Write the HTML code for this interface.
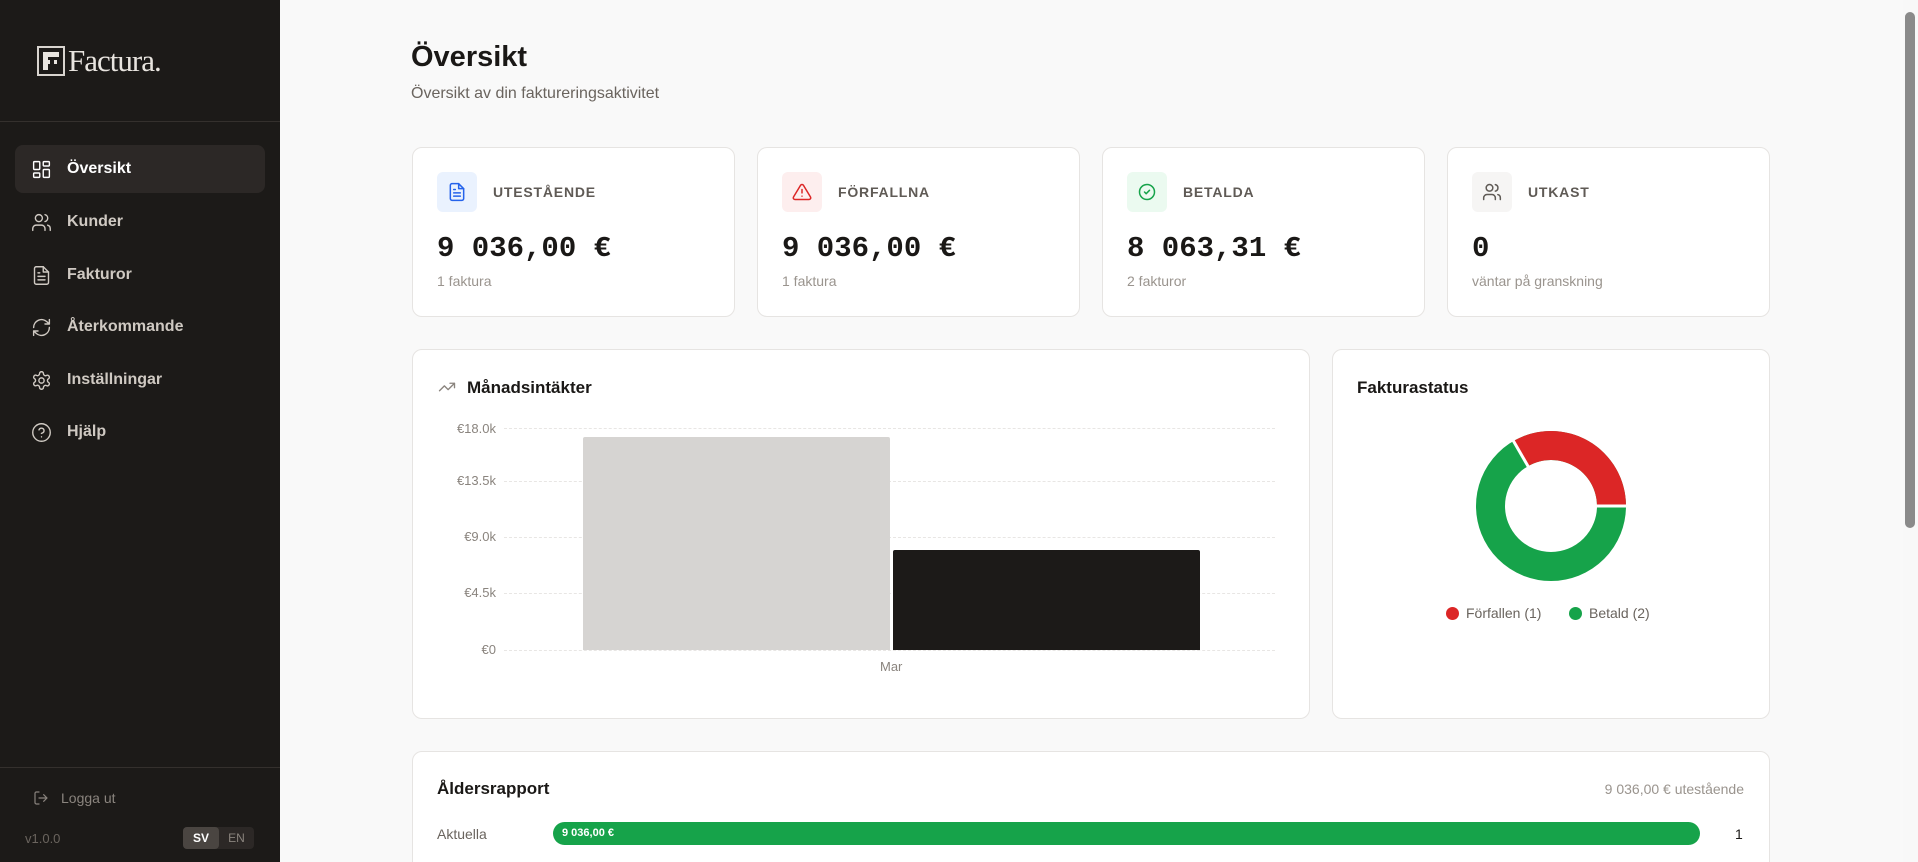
<!DOCTYPE html>
<html><head><meta charset="utf-8">
<style>
*{box-sizing:border-box;margin:0;padding:0}
html,body{width:1918px;height:862px;overflow:hidden;background:#f9f9f9;font-family:"Liberation Sans",sans-serif;color:#1a1816}
#root{position:relative;width:1918px;height:862px;overflow:hidden}
.sb{position:absolute;left:0;top:0;width:280px;height:862px;background:#1c1a18}
.logo{position:absolute;left:37px;top:43px;display:flex;align-items:center;color:#e8e4df;font-family:"Liberation Serif",serif;font-size:31px;letter-spacing:-1px}
.logo .box{width:28px;height:30px;border:2px solid #d8d4cf;margin-right:3px;position:relative}
.div{position:absolute;left:0;width:280px;height:1px;background:#34302d}
.nav{position:absolute;left:15px;width:250px;height:48px;display:flex;align-items:center;padding-left:16px;font-size:16px;font-weight:bold;color:#cfc9c2;border-radius:8px}
.nav.act{background:#2c2826;color:#fff}
.nav svg{width:21px;height:21px;margin-right:15px;fill:none;stroke:#cfc9c2;stroke-width:1.6;stroke-linecap:round;stroke-linejoin:round}
.nav.act svg{stroke:#fff}
.card{position:absolute;background:#fff;border:1px solid #e6e4e2;border-radius:10px}
.ib{position:absolute;left:24px;top:24px;width:40px;height:40px;border-radius:6px;display:flex;align-items:center;justify-content:center}
.ib svg{width:20px;height:20px;fill:none;stroke-width:1.8;stroke-linecap:round;stroke-linejoin:round}
.lab{position:absolute;left:80px;top:36px;font-size:14px;font-weight:bold;letter-spacing:.8px;color:#5f5a55}
.num{position:absolute;left:24px;top:84px;font-family:"Liberation Mono",monospace;font-weight:bold;font-size:29px;color:#1a1816}
.sub{position:absolute;left:24px;top:125px;font-size:14px;color:#9a948e}
.ax{position:absolute;font-size:13px;color:#8a847e;text-align:right;width:60px}
.grid{position:absolute;left:504px;width:771px;border-top:1.5px dashed #e8e6e4}
</style></head><body><div id="root">
<div class="sb">
  <div class="logo"><div class="box"><svg width="24" height="26" viewBox="0 0 24 26" style="position:absolute;left:0;top:0"><path d="M4 4h16v5H9v3h9v4H9v6H4z" fill="#e8e4df"/><path d="M11 12h4v4h-4z" fill="#1c1a18"/></svg></div>Factura.</div>
  <div class="div" style="top:121px"></div>
  <div class="nav act" style="top:145px"><svg viewBox="0 0 24 24"><rect x="3" y="3" width="7" height="9" rx="1"/><rect x="14" y="3" width="7" height="5" rx="1"/><rect x="14" y="12" width="7" height="9" rx="1"/><rect x="3" y="16" width="7" height="5" rx="1"/></svg>Översikt</div>
  <div class="nav" style="top:198px"><svg viewBox="0 0 24 24"><circle cx="9" cy="7" r="4"/><path d="M2 21v-2a4 4 0 0 1 4-4h6a4 4 0 0 1 4 4v2M16 3.1a4 4 0 0 1 0 7.8M22 21v-2a4 4 0 0 0-3-3.9"/></svg>Kunder</div>
  <div class="nav" style="top:251px"><svg viewBox="0 0 24 24"><path d="M14 2H6a2 2 0 0 0-2 2v16a2 2 0 0 0 2 2h12a2 2 0 0 0 2-2V8z"/><path d="M14 2v6h6M16 13H8M16 17H8M10 9H8"/></svg>Fakturor</div>
  <div class="nav" style="top:303px"><svg viewBox="0 0 24 24"><path d="M3 12a9 9 0 0 1 15-6.7L21 8M21 3v5h-5M21 12a9 9 0 0 1-15 6.7L3 16M8 16H3v5"/></svg>Återkommande</div>
  <div class="nav" style="top:356px"><svg viewBox="0 0 24 24"><circle cx="12" cy="12" r="3"/><path d="M12.2 2h-.4a2 2 0 0 0-2 2v.2a2 2 0 0 1-1 1.7l-.4.3a2 2 0 0 1-2 0l-.2-.1a2 2 0 0 0-2.7.7l-.2.4a2 2 0 0 0 .7 2.7l.2.1a2 2 0 0 1 1 1.7v.5a2 2 0 0 1-1 1.7l-.2.1a2 2 0 0 0-.7 2.7l.2.4a2 2 0 0 0 2.7.7l.2-.1a2 2 0 0 1 2 0l.4.3a2 2 0 0 1 1 1.7V20a2 2 0 0 0 2 2h.4a2 2 0 0 0 2-2v-.2a2 2 0 0 1 1-1.7l.4-.3a2 2 0 0 1 2 0l.2.1a2 2 0 0 0 2.7-.7l.2-.4a2 2 0 0 0-.7-2.7l-.2-.1a2 2 0 0 1-1-1.7v-.5a2 2 0 0 1 1-1.7l.2-.1a2 2 0 0 0 .7-2.7l-.2-.4a2 2 0 0 0-2.7-.7l-.2.1a2 2 0 0 1-2 0l-.4-.3a2 2 0 0 1-1-1.7V4a2 2 0 0 0-2-2z"/></svg>Inställningar</div>
  <div class="nav" style="top:408px"><svg viewBox="0 0 24 24"><circle cx="12" cy="12" r="10"/><path d="M9.1 9a3 3 0 0 1 5.8 1c0 2-3 3-3 3M12 17h.01"/></svg>Hjälp</div>
  <div class="div" style="top:767px"></div>
  <div style="position:absolute;left:33px;top:790px;display:flex;align-items:center;font-size:14px;color:#8a847e"><svg width="16" height="16" viewBox="0 0 24 24" fill="none" stroke="#8a847e" stroke-width="1.8" stroke-linecap="round" stroke-linejoin="round" style="margin-right:12px"><path d="M9 21H5a2 2 0 0 1-2-2V5a2 2 0 0 1 2-2h4M16 17l5-5-5-5M21 12H9"/></svg>Logga ut</div>
  <div style="position:absolute;left:25px;top:831px;font-size:13px;color:#6a645e">v1.0.0</div>
  <div style="position:absolute;left:183px;top:827px;width:71px;height:22px;background:#2c2826;border-radius:4px;display:flex;font-size:12px">
    <div style="width:36px;background:#4a4541;border-radius:4px;color:#fff;font-weight:bold;text-align:center;line-height:22px">SV</div>
    <div style="flex:1;text-align:center;line-height:22px;color:#8a847e">EN</div>
  </div>
</div>
<div style="position:absolute;left:411px;top:41px;font-size:29px;font-weight:bold">Översikt</div>
<div style="position:absolute;left:411px;top:85px;font-size:16px;color:#6a645e">Översikt av din faktureringsaktivitet</div>

<div class="card" style="left:412px;top:147px;width:323px;height:170px">
  <div class="ib" style="background:#eaf2fe"><svg viewBox="0 0 24 24" stroke="#2563eb"><path d="M14 2H6a2 2 0 0 0-2 2v16a2 2 0 0 0 2 2h12a2 2 0 0 0 2-2V8z"/><path d="M14 2v6h6M16 13H8M16 17H8M10 9H8"/></svg></div>
  <div class="lab">UTESTÅENDE</div><div class="num">9 036,00 €</div><div class="sub">1 faktura</div></div>
<div class="card" style="left:757px;top:147px;width:323px;height:170px">
  <div class="ib" style="background:#fdeeee"><svg viewBox="0 0 24 24" stroke="#dc2626"><path d="M10.3 3.9 1.8 18a2 2 0 0 0 1.7 3h17a2 2 0 0 0 1.7-3L13.7 3.9a2 2 0 0 0-3.4 0zM12 9v4M12 17h.01"/></svg></div>
  <div class="lab">FÖRFALLNA</div><div class="num">9 036,00 €</div><div class="sub">1 faktura</div></div>
<div class="card" style="left:1102px;top:147px;width:323px;height:170px">
  <div class="ib" style="background:#ebfaf0"><svg viewBox="0 0 24 24" stroke="#16a34a"><circle cx="12" cy="12" r="9"/><path d="m9 12 2 2 4-4"/></svg></div>
  <div class="lab">BETALDA</div><div class="num">8 063,31 €</div><div class="sub">2 fakturor</div></div>
<div class="card" style="left:1447px;top:147px;width:323px;height:170px">
  <div class="ib" style="background:#f6f5f4"><svg viewBox="0 0 24 24" stroke="#5f5a55"><circle cx="9" cy="7" r="4"/><path d="M2 21v-2a4 4 0 0 1 4-4h6a4 4 0 0 1 4 4v2M16 3.1a4 4 0 0 1 0 7.8M22 21v-2a4 4 0 0 0-3-3.9"/></svg></div>
  <div class="lab">UTKAST</div><div class="num">0</div><div class="sub">väntar på granskning</div></div>

<div class="card" style="left:412px;top:349px;width:898px;height:370px"></div>
<svg style="position:absolute;left:437px;top:378px" width="20" height="18" viewBox="0 0 24 24" fill="none" stroke="#8a847e" stroke-width="1.8" stroke-linecap="round" stroke-linejoin="round"><path d="m22 7-8.5 8.5-5-5L2 17M16 7h6v6"/></svg>
<div style="position:absolute;left:467px;top:378px;font-size:17px;font-weight:bold">Månadsintäkter</div>
<div class="ax" style="left:436px;top:421px">€18.0k</div>
<div class="ax" style="left:436px;top:473px">€13.5k</div>
<div class="ax" style="left:436px;top:529px">€9.0k</div>
<div class="ax" style="left:436px;top:585px">€4.5k</div>
<div class="ax" style="left:436px;top:642px">€0</div>
<div class="grid" style="top:428px"></div>
<div class="grid" style="top:481px"></div>
<div class="grid" style="top:537px"></div>
<div class="grid" style="top:593px"></div>
<div class="grid" style="top:650px"></div>
<div style="position:absolute;left:583px;top:437px;width:307px;height:213px;background:#d6d4d2;border-radius:2px 2px 0 0"></div>
<div style="position:absolute;left:893px;top:550px;width:307px;height:100px;background:#1c1a18;border-radius:2px 2px 0 0"></div>
<div style="position:absolute;left:880px;top:659px;font-size:13px;color:#8a847e">Mar</div>

<div class="card" style="left:1332px;top:349px;width:438px;height:370px"></div>
<div style="position:absolute;left:1357px;top:378px;font-size:17px;font-weight:bold">Fakturastatus</div>
<svg style="position:absolute;left:1471px;top:426px" width="160" height="160" viewBox="-80 -80 160 160">
  <circle r="60.5" fill="none" stroke="#16a34a" stroke-width="29"/>
  <path d="M-37.5-65A75 75 0 0 1 75 0L46 0A46 46 0 0 0-23-39.8Z" fill="#dc2626"/>
  <line x1="0" y1="0" x2="80" y2="0" stroke="#fff" stroke-width="3"/>
  <line x1="0" y1="0" x2="-41" y2="-71" stroke="#fff" stroke-width="3"/>
  <circle r="45" fill="#fff"/>
</svg>
<div style="position:absolute;left:1446px;top:607px;width:13px;height:13px;border-radius:50%;background:#dc2626"></div>
<div style="position:absolute;left:1466px;top:605px;font-size:14px;color:#6a645e">Förfallen (1)</div>
<div style="position:absolute;left:1569px;top:607px;width:13px;height:13px;border-radius:50%;background:#16a34a"></div>
<div style="position:absolute;left:1589px;top:605px;font-size:14px;color:#6a645e">Betald (2)</div>

<div class="card" style="left:412px;top:751px;width:1358px;height:130px"></div>
<div style="position:absolute;left:437px;top:779px;font-size:17px;font-weight:bold">Åldersrapport</div>
<div style="position:absolute;left:1500px;width:244px;text-align:right;top:781px;font-size:14px;color:#9a948e">9 036,00 € utestående</div>
<div style="position:absolute;left:437px;top:826px;font-size:14px;color:#6a645e">Aktuella</div>
<div style="position:absolute;left:553px;top:822px;width:1147px;height:23px;background:#16a34a;border-radius:12px;color:#fff;font-size:11px;font-weight:bold;line-height:23px;padding-left:9px">9 036,00 €</div>
<div style="position:absolute;left:1735px;top:826px;font-size:14px;color:#1a1816">1</div>

<div style="position:absolute;left:1903px;top:0;width:15px;height:862px;background:#f8f8f8"></div>
<div style="position:absolute;left:1905px;top:12px;width:10px;height:516px;background:#8a8a8a;border-radius:5px"></div>
</div></body></html>
